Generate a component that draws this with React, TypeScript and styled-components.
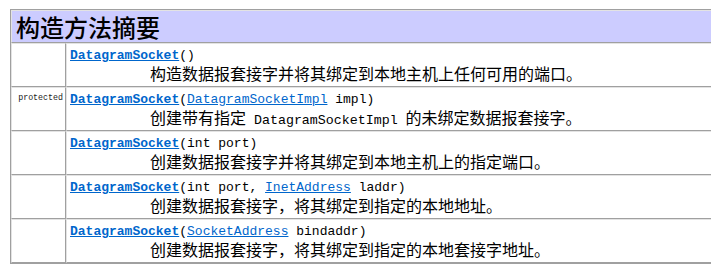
import styled, { createGlobalStyle } from 'styled-components';

const GlobalStyle = createGlobalStyle`
  html, body {
    margin: 0;
    padding: 0;
    background: #ffffff;
    overflow: hidden;
  }
  body {
    padding: 9px 0 0 10px;
    font-family: "Noto Sans CJK SC", "Liberation Sans", sans-serif;
    color: #000000;
  }
`;

interface IParam {
  type?: string;
  link?: boolean;
  name: string;
}

interface IConstructor {
  modifier?: string;
  params: IParam[];
  summary: (string | { code: string })[];
}

const constructors: IConstructor[] = [
  {
    params: [],
    summary: ['构造数据报套接字并将其绑定到本地主机上任何可用的端口。'],
  },
  {
    modifier: 'protected',
    params: [{ type: 'DatagramSocketImpl', link: true, name: 'impl' }],
    summary: ['创建带有指定', { code: ' DatagramSocketImpl ' }, '的未绑定数据报套接字。'],
  },
  {
    params: [{ type: 'int', name: 'port' }],
    summary: ['创建数据报套接字并将其绑定到本地主机上的指定端口。'],
  },
  {
    params: [
      { type: 'int', name: 'port' },
      { type: 'InetAddress', link: true, name: 'laddr' },
    ],
    summary: ['创建数据报套接字，将其绑定到指定的本地地址。'],
  },
  {
    params: [{ type: 'SocketAddress', link: true, name: 'bindaddr' }],
    summary: ['创建数据报套接字，将其绑定到指定的本地套接字地址。'],
  },
];

export default function App(): JSX.Element {
  return (
    <>
      <GlobalStyle />
      <SummaryTable>
        <tbody>
          <tr>
            <HeaderCell colSpan={2}>构造方法摘要</HeaderCell>
          </tr>
          {constructors.map((c, i) => (
            <tr key={i}>
              <ModifierCell>{c.modifier && <code>{c.modifier}</code>}</ModifierCell>
              <BodyCell>
                <Signature>
                  <MemberLink>DatagramSocket</MemberLink>
                  <span>(</span>
                  {c.params.map((p, j) => (
                    <span key={j}>
                      {j > 0 && ', '}
                      {p.link ? <TypeLink>{p.type}</TypeLink> : p.type}
                      {' ' + p.name}
                    </span>
                  ))}
                  <span>)</span>
                </Signature>
                <Summary>
                  {c.summary.map((s, k) =>
                    typeof s === 'string' ? <span key={k}>{s}</span> : <InlineCode key={k}>{s.code}</InlineCode>
                  )}
                </Summary>
              </BodyCell>
            </tr>
          ))}
        </tbody>
      </SummaryTable>
    </>
  );
}

const SummaryTable = styled.table`
  width: 730px;
  border-collapse: separate;
  border-spacing: 0;
  border-top: 1px solid #a0a0a0;
  border-left: 1px solid #a0a0a0;
  border-bottom: 1px solid #a0a0a0;

  td {
    border-top: 1px solid #e3e3e3;
    border-left: 1px solid #e3e3e3;
    border-bottom: 1px solid #a0a0a0;
    border-right: 1px solid #a0a0a0;
    vertical-align: top;
  }
`;

const HeaderCell = styled.td`
  background: #ccccff;
  height: 31px;
  padding: 0 0 0 4px;
  font-size: 24px;
  font-weight: 500;
  line-height: 31px;
  vertical-align: middle !important;
`;

const ModifierCell = styled.td`
  width: 48px;
  padding: 5px 2px 3px 3px;
  text-align: right;
  font-family: "Liberation Mono", monospace;
  font-size: 8.3px;
  line-height: 10px;
  color: #1a1a1a;

  code {
    font-family: inherit;
    font-size: inherit;
  }
`;

const BodyCell = styled.td`
  padding: 3px;
`;

const Signature = styled.div`
  font-family: "Liberation Mono", monospace;
  font-size: 13px;
  line-height: 17px;
  height: 17px;
  white-space: pre;
`;

const MemberLink = styled.a`
  color: #0066cc;
  font-weight: bold;
  text-decoration: underline;
`;

const TypeLink = styled.a`
  color: #0066cc;
  text-decoration: underline;
`;

const Summary = styled.div`
  padding-left: 80px;
  font-size: 16px;
  line-height: 19px;
  height: 19px;
  white-space: nowrap;
`;

const InlineCode = styled.span`
  font-family: "Liberation Mono", monospace;
  font-size: 13.3px;
  white-space: pre;
`;
